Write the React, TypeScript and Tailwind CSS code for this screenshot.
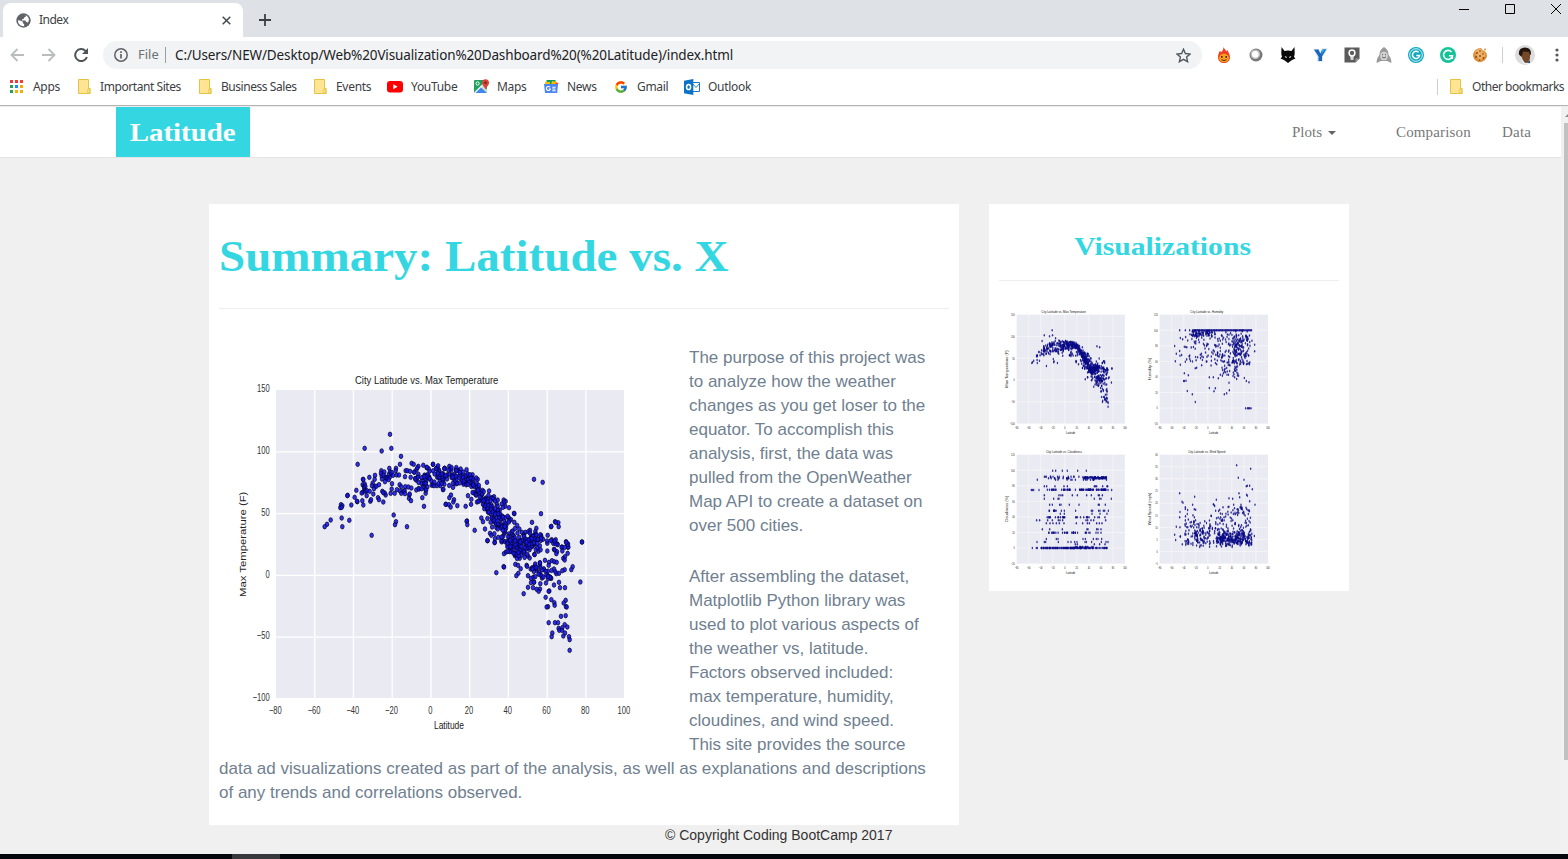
import React from "react";
import { FcGoogle } from "react-icons/fc";

type Pt = [number, number];

function rng(seed: number) {
  let s = seed;
  return () => {
    s = (s * 1664525 + 1013904223) % 4294967296;
    return s / 4294967296;
  };
}

const shift = (pts: Pt[], dx: number, dy: number): Pt[] => pts.map(([x, y]) => [x + dx, y + dy]);

// Southern latitudes
const south: Pt[] = [
  [543,223],[467,265],[518,273],[547,265],[576,289],[446,313],[573,313],[416,406],[415,407],[396,434],[400,437],[394,443],[398,442],
  [365,480],[354,493],[347,500],[398,474],[421,481],[400,500],[488,526],[554,465],[561,485],[558,494],[594,500],[427,435],[437,412],
  [442,391],[462,358],[463,359],[481,352],[498,346],[497,358],[445,425],[444,424],[463,435],[473,407],[484,424],[486,419],[493,402],[507,413],
  [510,419],[523,426],[530,405],[527,399],[600,415],[606,422],[640,413],[645,439],[650,400],[711,433],[561,325],[608,310],[614,313],
  [628,319],[672,313],[682,325],[707,325],[653,323],[460,422],[461,374],[467,372],[465,380],[469,379],[466,386],[468,391],[461,397],
  [470,394],[458,399],[474,392],[482,394],[491,369],[489,377],[498,379],[495,386],[502,379],[510,374],[517,332],[516,340],[518,348],
  [526,336],[524,346],[530,352],[519,357],[532,355],[528,365],[536,353],[541,325],[543,336],[540,343],[546,344],[548,337],[542,352],
  [539,359],[552,346],[560,332],[563,345],[570,345],[549,371],[548,387],[545,400],[557,400],[520,394],[523,398],[564,389],[572,374],
  [577,380],[573,393],[577,400],[584,394],[589,380],[598,381],[607,384],[587,392],[588,401],[601,405],[602,402],[590,332],[595,332],
  [603,334],[588,350],[605,352],[622,390],[630,387],[642,381],[702,389],[694,377],[684,377],[668,376],[672,374]
];
// Northern latitudes, warm half of the chart
const north: Pt[] = [
  [9,313],[58,319],[44,325],[43,326],[92,327],[312,358],[338,367],[171,367],[143,358],[333,461],[253,461],[252,460],[237,443],[306,487],
  [319,505],[375,485],[385,488],[378,487],[363,500],[364,499],[386,500],[353,526],[456,546],[63,405],[58,413],[72,419],[70,426],[47,433],
  [57,434],[62,441],[82,437],[107,439],[124,418],[123,433],[111,483],[110,484],[112,494],[134,511],[154,474],[159,485],[165,507],[172,542],
  [194,547],[195,536],[40,388],[114,407],[141,426],[150,422],[162,436],[163,446],[173,451],[192,410],[186,413],[191,418],[203,420],
  [221,420],[227,424],[222,426],[215,432],[200,432],[226,439],[184,434],[333,526],[339,538],[352,550],[365,539],[377,539],[370,550],
  [382,552],[408,545],[414,552],[414,562],[396,561],[243,479],[253,487],[236,473],[225,473],[213,478],[204,452],[207,466],[180,520],
  [184,526],[193,521],[220,528],[268,507],[276,517],[286,517],[300,511]
];
// Northern latitudes, cold half of the chart
const cold: Pt[] = [
  [173,2],[194,8],[219,2],[225,5],[222,41],[228,36],[255,47],[269,55],[221,80],[222,81],[199,98],[256,73],[264,76],[272,86],[265,100],
  [259,107],[290,76],[291,79],[281,161],[294,107],[294,142],[303,115],[303,128],[312,126],[312,127],[309,143],[331,131],[330,147],[320,148],
  [326,154],[345,61],[352,33],[336,114],[348,129],[358,153],[356,154],[347,172],[364,179],[372,135],[373,188],[374,196],[354,200],[350,201],
  [407,181],[401,189],[408,200],[410,201],[390,143],[405,143],[387,127],[451,126],[428,80],[424,89],[404,89],[397,92],[387,100],[379,101],
  [376,95],[372,87],[366,62],[373,65],[380,67],[357,67],[356,76],[400,55],[405,50],[404,60],[413,40],[395,22],[397,33],[415,21],[412,13],
  [409,7],[456,6],[356,248],[375,248],[384,248],[393,229],[407,227],[404,254],[412,261],[397,263],[386,265],[388,271],[396,271],[367,279],
  [365,290],[405,279],[400,288],[417,290],[419,299],[419,331],[383,14],[376,11],[372,28],[374,30],[381,35],[379,41],[325,34],[313,43],
  [314,44],[299,54],[293,48],[292,43],[281,39],[272,34],[302,87],[307,83],[316,78],[330,76],[342,89],[351,3],[363,2],[374,3],[404,22]
];

function temperatureCloud(): Pt[] {
  const r = rng(41);
  const out: Pt[] = [...shift(south, -30, 39), ...shift(north, 633, 39), ...shift(cold, 633, 579)];
  // centre line of the dense band: x, y, vertical spread
  const band: [number, number, number][] = [
    [585, 391, 36], [640, 392, 42], [700, 390, 40], [745, 396, 34], [775, 424, 40], [805, 466, 54],
    [825, 503, 66], [850, 534, 66], [885, 580, 58], [925, 590, 48], [968, 592, 44],
  ];
  const counts = [40, 42, 40, 26, 26, 26, 32, 34, 34, 28];
  band.slice(0, -1).forEach((a, i) => {
    const b = band[i + 1];
    for (let k = 0; k < counts[i]; k++) {
      const t = r();
      const n = r() + r() - 1;
      out.push([a[0] + (b[0] - a[0]) * t, a[1] + (b[1] - a[1]) * t + n * (a[2] + (b[2] - a[2]) * t)]);
    }
  });
  for (let k = 0; k < 26; k++) out.push([862 + r() * 46, 600 + (r() + r() - 1) * 26]);
  for (let k = 0; k < 18; k++) out.push([915 + r() * 45, 580 + (r() + r() - 1) * 18]);
  for (let k = 0; k < 20; k++) out.push([935 + r() * 40, 668 + (r() + r() - 1) * 26]);
  for (let k = 0; k < 12; k++) out.push([980 + r() * 20, 690 + (r() + r() - 1) * 24]);
  return out;
}
const temperature = temperatureCloud();

const frameX = 53;
const frameY = 44;
const frameW = 325;
const frameH = 327;

const temperatureSmall: Pt[] = temperature.map(([x, y]) => [
  frameX + ((x - 171) / 1044) * frameW,
  frameY + ((y - 129) / 924) * frameH,
]);

function humidity(): Pt[] {
  const r = rng(7);
  const out: Pt[] = shift(
    [
      [119,106],[104,153],[109,176],[106,199],[121,129],[121,209],[133,235],[131,258],[138,257],[145,241],[142,288],[157,298],[166,321],
      [185,211],[208,247],[208,279],[222,289],[226,280],[235,250],[253,298],[260,295],[268,286],[267,263],[313,249],[319,258],[327,262],
      [344,169],[344,149],[336,137],[170,218],[220,247],[241,239],[317,340],[323,340],[326,340],[329,340],[333,340],[120,182],[125,180],
      [128,133],[133,155],[119,168],[284,247],[290,252],[279,243],[166,220],[136,106],[149,106],[150,118],[133,258]
    ] as Pt[], -6, -15);
  for (let x = 152; x < 305; x += 2.6) out.push([x + r(), 91]);
  for (let x = 303; x < 331; x += 3.2) out.push([x, 91]);
  for (let k = 0; k < 55; k++) out.push([150 + r() * 60, 92 + r() * 18]);
  for (let k = 0; k < 62; k++) out.push([130 + r() * 75, 92 + r() * 95]);
  for (let k = 0; k < 110; k++) out.push([205 + r() * 115, 92 + r() * 105]);
  for (let k = 0; k < 80; k++) out.push([270 + r() * 55, 105 + r() * 88]);
  for (let k = 0; k < 40; k++) out.push([275 + r() * 28, 115 + r() * 50]);
  for (let k = 0; k < 45; k++) out.push([240 + r() * 50, 165 + r() * 65]);
  return out;
}

function cloudiness(): Pt[] {
  const r = rng(19);
  const out: Pt[] = [];
  const row = (y: number, x0: number, x1: number, n: number) => {
    for (let k = 0; k < n; k++) out.push([x0 - 27 + r() * (x1 - x0), y]);
  };
  const at = (y: number, xs: number[]) => xs.forEach((x) => out.push([x - 27, y]));
  at(92, [188, 197, 217, 232, 263, 289]);
  row(110, 163, 270, 14); row(115, 170, 270, 12); row(112, 275, 350, 30); row(115, 282, 353, 34); row(119, 195, 350, 14);
  at(119, [142]);
  at(139, [163, 170, 195, 222, 232, 313, 316, 320, 338, 351, 353]);
  at(150, [124, 127, 131, 147, 365, 354]);
  row(149, 160, 275, 24); row(149, 268, 352, 48);
  at(166, [163, 207, 213, 218, 247, 262, 290, 304, 325, 328, 337]);
  at(176, [163, 191, 204, 207, 313, 329, 333, 364]);
  at(194, [179, 187, 209, 213, 238, 267, 325, 328, 346]);
  row(212, 172, 226, 10); at(212, [257, 304, 308, 326, 330, 340, 344, 355]);
  at(221, [211, 223, 306, 330, 351]);
  row(232, 170, 225, 14); row(232, 255, 300, 9); at(232, [314, 324, 328, 345]);
  at(241, [140, 149, 173, 187, 205, 210, 218, 288, 293, 303, 311, 347]);
  at(250, [169, 180, 189, 199, 208, 222, 259, 278, 292, 298, 320, 328, 336]);
  at(268, [157, 179, 217, 291, 294, 320, 324, 333]);
  row(278, 176, 235, 15); row(278, 240, 302, 14); at(278, [318, 324, 333]);
  at(297, [169, 199, 204, 279, 286, 310, 319, 324, 335]);
  at(306, [141, 163, 167, 205, 234, 243, 254, 261, 285, 289, 305, 334, 348, 354]);
  at(313, [262, 256, 313, 329, 345]);
  row(324, 150, 215, 36); row(324, 217, 312, 66); row(324, 312, 356, 14); at(324, [127, 142, 139]);
  row(321, 255, 310, 14);
  return out;
}

function wind(): Pt[] {
  const r = rng(88);
  const out: Pt[] = shift(
    [
      [290,76],[332,86],[295,113],[312,119],[337,148],[329,137],[322,137],[319,139],[297,160],[299,172],[320,164],[322,167],[329,184],
      [345,194],[343,288],[119,160],[126,185],[129,188],[164,170],[158,194],[136,202],[143,210],[120,216],[119,232],[120,262],[109,260],
      [104,284],[107,300],[121,290],[127,313],[267,175],[278,176],[229,179],[222,195],[220,193],[224,198],[281,194],[303,194],[239,209],
      [227,212],[303,200],[304,206],[163,208],[167,209],[121,289],[214,228],[236,213],[136,207],[163,232],[159,226]
    ] as Pt[], -6, 0);
  for (let k = 0; k < 48; k++) out.push([128 + r() * 34, 315 - Math.pow(r(), 1.3) * 95]);
  for (let k = 0; k < 95; k++) out.push([158 + r() * 46, 326 - (r() + r() * r()) * 48]);
  for (let k = 0; k < 36; k++) out.push([202 + r() * 40, 315 - r() * 95]);
  for (let k = 0; k < 240; k++) out.push([222 + r() * 108, 325 - (r() + r()) * 28]);
  for (let k = 0; k < 120; k++) out.push([235 + r() * 92, 310 - Math.pow(r(), 1.2) * 110]);
  return out;
}

const xTicks = ["−80", "−60", "−40", "−20", "0", "20", "40", "60", "80", "100"];

function MainChart() {
  const yTicks = ["150", "100", "50", "0", "−50", "−100"];
  return (
    <svg className="float-left mr-5 mt-px h-[405px] w-[450px]" viewBox="0 0 1350 1215" fontFamily="Liberation Sans, Arial, sans-serif">
      <rect x="171" y="129" width="1044" height="924" fill="#eaeaf2" />
      {xTicks.map((t, i) => (
        <g key={t}>
          {i > 0 && i < 9 && <line x1={171 + i * 116.2} x2={171 + i * 116.2} y1="129" y2="1053" stroke="#fff" strokeWidth="4" />}
          <text transform={`translate(${169 + i * 116.2} 1101) scale(.71 1)`} fontSize="32" fill="#333" textAnchor="middle">{t}</text>
        </g>
      ))}
      {yTicks.map((t, i) => (
        <g key={t}>
          {i > 0 && i < 5 && <line x1="171" x2="1215" y1={129 + i * 185.4} y2={129 + i * 185.4} stroke="#fff" strokeWidth="4" />}
          <text transform={`translate(152 ${135 + i * 185.6}) scale(.71 1)`} fontSize="32" fill="#333" textAnchor="end">{t}</text>
        </g>
      ))}
      <g fill="#1414f5" fillOpacity="0.88" stroke="#05052a" strokeOpacity="0.85" strokeWidth="2.6">
        {temperature.map(([x, y], i) => <ellipse key={i} cx={x} cy={y} rx="5.4" ry="6.8" />)}
      </g>
      <text x="408" y="111" fontSize="35" fill="#222" textLength="430" lengthAdjust="spacingAndGlyphs">City Latitude vs. Max Temperature</text>
      <text x="645" y="1147" fontSize="31" fill="#222" textLength="90" lengthAdjust="spacingAndGlyphs">Latitude</text>
      <text transform="translate(80 750) rotate(-90)" fontSize="25" fill="#222" textLength="316" lengthAdjust="spacingAndGlyphs">Max Temperature (F)</text>
    </svg>
  );
}

interface ThumbProps {
  title: string;
  titleX: number;
  titleW: number;
  yLabel: string;
  yLabelW: number;
  yTicks: string[];
  points: Pt[];
}

function Thumb({ title, titleX, titleW, yLabel, yLabelW, yTicks, points }: ThumbProps) {
  const step = frameH / (yTicks.length - 1);
  return (
    <svg className="h-[140px] w-[143px]" viewBox="0 0 429 420" fontFamily="Liberation Sans, Arial, sans-serif">
      <rect x={frameX} y={frameY} width={frameW} height={frameH} fill="#eaeaf2" />
      {xTicks.map((t, i) => (
        <g key={t}>
          {i > 0 && i < 9 && <line x1={frameX + i * 36.1} x2={frameX + i * 36.1} y1={frameY} y2={frameY + frameH} stroke="#f7f7fb" strokeWidth="2" />}
          <text transform={`translate(${frameX + i * 36.1} 387) scale(.6 1)`} fontSize="11" fill="#222" textAnchor="middle">{t}</text>
        </g>
      ))}
      {yTicks.map((t, i) => (
        <g key={t}>
          {i > 0 && i < yTicks.length - 1 && <line x1={frameX} x2={frameX + frameW} y1={frameY + i * step} y2={frameY + i * step} stroke="#f7f7fb" strokeWidth="2" />}
          <text transform={`translate(47 ${frameY + 4 + i * step}) scale(.6 1)`} fontSize="11" fill="#222" textAnchor="end">{t}</text>
        </g>
      ))}
      <g fill="#0a0a86" fillOpacity="0.82">
        {points.map(([x, y], i) => <ellipse key={i} cx={x} cy={y} rx="2.1" ry="3.8" />)}
      </g>
      <text x={titleX} y="38" fontSize="13" fill="#111" textLength={titleW} lengthAdjust="spacingAndGlyphs">{title}</text>
      <text x="201" y="403" fontSize="12" fill="#111" textLength="28" lengthAdjust="spacingAndGlyphs">Latitude</text>
      <text transform={`translate(26 ${207 + yLabelW / 2}) rotate(-90)`} fontSize="9" fill="#222" textLength={yLabelW} lengthAdjust="spacingAndGlyphs">{yLabel}</text>
    </svg>
  );
}

const percentTicks = ["120", "100", "80", "60", "40", "20", "0", "−20"];
const thumbs: ThumbProps[] = [
  { title: "City Latitude vs. Max Temperature", titleX: 127, titleW: 134, yLabel: "Max Temperature (F)", yLabelW: 112, yTicks: ["150", "100", "50", "0", "−50", "−100"], points: temperatureSmall },
  { title: "City Latitude vs. Humidity", titleX: 145, titleW: 99, yLabel: "Humidity (%)", yLabelW: 68, yTicks: percentTicks, points: humidity() },
  { title: "City Latitude vs. Cloudiness", titleX: 141, titleW: 108, yLabel: "Cloudiness (%)", yLabelW: 80, yTicks: percentTicks, points: cloudiness() },
  { title: "City Latitude vs. Wind Speed", titleX: 138, titleW: 112, yLabel: "Wind Speed (mph)", yLabelW: 98, yTicks: ["40", "35", "30", "25", "20", "15", "10", "5", "0", "−5"], points: wind() },
];

function Folder() {
  return (
    <svg className="h-[15px] w-[13px] shrink-0" viewBox="0 0 13 15">
      <path d="M.5.5h10v9h1.7v5H.5z" fill="#ffe493" stroke="#e5c440" />
      <path d="M9.7 13.8v-3.4h1.6v3.4z" fill="#fff0b8" stroke="#e5c440" strokeWidth=".8" />
    </svg>
  );
}

function Globe() {
  return (
    <svg className="h-[15px] w-[15px]" viewBox="0 0 24 24">
      <circle cx="12" cy="12" r="11.5" fill="#5f6368" />
      <path d="M3 11.500l5 1 3 1.500v2.500l2 1V21C7.500 21.500 3 17.500 3 11.500zM12 3l3.500.5V6l-3 1.500v2H10V12h5l1.500 2.500 2.500.5 1-1.500c2-4-1-9-5-10z" fill="#fff" />
    </svg>
  );
}

function AppsGrid() {
  const colors = ["#f03a37", "#f03a37", "#f03a37", "#2a9d58", "#1a8cf0", "#f4a800", "#2a9d58", "#f4b000", "#f4b000"];
  return (
    <svg className="h-[13px] w-[13px]" viewBox="0 0 13 13">
      {colors.map((c, i) => <rect key={i} x={(i % 3) * 5} y={Math.floor(i / 3) * 5} width="3" height="3" fill={c} />)}
    </svg>
  );
}

function YouTube() {
  return (
    <svg className="h-[12px] w-[16px]" viewBox="0 0 16 12">
      <rect width="16" height="11.500" rx="3" fill="#f00" />
      <path d="M6.300 3.300v5L10.600 5.800z" fill="#fff" />
    </svg>
  );
}

function Maps() {
  return (
    <svg className="h-[15px] w-[15px]" viewBox="0 0 15 15">
      <rect y="1" width="13" height="13" rx="1" fill="#1fa15d" />
      <path d="M0 13.500 11.500 2H13v2L3 14H1z" fill="#f2f2f2" />
      <path d="M1.500 14 7 8.500 12.500 14z" fill="#4285f4" />
      <path d="m7 8.500 2-2 4 4V14z" fill="#d5d9df" />
      <circle cx="3.600" cy="4.500" r="1.600" fill="none" stroke="#fff" />
      <path d="M11.500 10.500C11 8 8 6.500 8 3.700a3.500 3.500 0 0 1 7 0c0 2.800-3 4.300-3.500 6.800z" fill="#db4437" />
      <circle cx="11.500" cy="3.700" r="1.200" fill="#7b231e" />
    </svg>
  );
}

function News() {
  return (
    <svg className="h-[13px] w-[15px]" viewBox="0 0 15 13">
      <path d="M2.500 0h9v4h-9z" fill="#0f9d58" />
      <path d="m8 1 5 1-1 3H7z" fill="#fbbc04" />
      <path d="M1 2h5v3H1z" fill="#fbbc04" />
      <path d="M11 2.500 14.500 3l-1 3z" fill="#ea4335" />
      <path d="M0 4h14l-.8 9H1z" fill="#4c86ee" />
      <path d="M6 7.300A2 2 0 1 0 6.300 9H4.700M8.300 7.200h3.400M8.300 9h3M8.300 10.800h3.400" fill="none" stroke="#fff" strokeWidth="1.100" />
    </svg>
  );
}

function Outlook() {
  return (
    <svg className="h-[16px] w-[16px]" viewBox="0 0 16 16">
      <path d="M8.500 3.500h7v9h-7z" fill="#fff" stroke="#1976c8" />
      <path d="m8.500 4.500 3.500 4 3.500-4" fill="none" stroke="#1976c8" strokeWidth=".9" />
      <path d="m0 1.700 9.300-1.700v16L0 14.300z" fill="#0b72c6" />
      <ellipse cx="4.600" cy="8" rx="2" ry="2.600" fill="none" stroke="#fff" strokeWidth="1.500" />
    </svg>
  );
}

const extensions: React.ReactNode[] = [
  <g key="flame">
    <path d="M7.500 0c.5 2 2.500 2.500 2.500 4.500L11.500 3c.5 2 2.500 4.500 2.500 7 0 4-3 6-6 6s-6-2-6-6c0-2.500 1-3.500 1.500-6L5.500 5C6.500 4 7.500 2 7.500 0z" fill="#ef3e22" />
    <ellipse cx="8" cy="11" rx="5" ry="4.300" fill="#f8a01c" />
    <path d="M5.800 9v1.800M10.200 9v1.800" stroke="#4a1d06" strokeWidth="1.500" />
    <path d="M5.500 12.700q2.500 1.800 5 0" stroke="#4a1d06" fill="none" strokeWidth=".9" />
  </g>,
  <g key="orb">
    <circle cx="8" cy="8" r="6.500" fill="#777" />
    <circle cx="7.300" cy="7.300" r="4.100" fill="#fff" stroke="#bbb" strokeWidth="1.500" />
  </g>,
  <g key="wolf">
    <path d="M1.500 0 4.500 4q3.500-1 7 0l3-4 .2 7-.7 3 1.500 1.500-3.500 1.500-2 1.500L8 16l-2-1.500L4 13 .5 11.500 2 10l-.7-3z" fill="#090909" />
    <path d="m4.500 9 2.700 1-1.200 1zM11.500 9 8.800 10l1.200 1z" fill="#fff" />
  </g>,
  <g key="y">
    <path d="M1 2h6l1 3 2-4h6l-5 8v6H5v-5z" fill="#e7e9ed" />
    <path d="M2 2.500h4.500L8.300 6.500 10 3l1.500-.8H14.500L10 9.500V14H6.500V9.500z" fill="#1767bd" />
    <path d="m10 3 2-1h2L9 8z" fill="#2f9fe8" />
  </g>,
  <g key="keep">
    <path d="M.5.500h15v11l-4 4h-11z" fill="#5b5b5b" />
    <path d="M11.500 15.500v-4h4z" fill="#999" />
    <circle cx="8" cy="6" r="2.900" fill="#5b5b5b" stroke="#fff" strokeWidth="1.500" />
    <path d="M6.300 10h3.400M6.500 12h3" stroke="#fff" strokeWidth="1.500" />
  </g>,
  <g key="rocket">
    <path d="M8 0c3 2 4.500 4 4.500 7.500L15 12l.5 4L11 14H5L.5 16 1 12l2.500-4.500C3.500 4 5 2 8 0z" fill="#9b9b9b" />
    <ellipse cx="8" cy="9" rx="3.800" ry="4.200" fill="#d2d2d2" />
    <path d="M6.500 7v1.200M9.500 7v1.200M6 10q2 1.800 4 0" stroke="#666" fill="none" />
  </g>,
  <g key="gblue">
    <circle cx="8" cy="8" r="8" fill="#11a9bf" />
    <circle cx="8" cy="8" r="6.300" fill="none" stroke="#fff" strokeWidth=".8" />
    <path d="M10.500 5.300A3.600 3.600 0 1 0 11.600 8.500H8.300" fill="none" stroke="#fff" strokeWidth="1.500" />
  </g>,
  <g key="ggreen">
    <circle cx="8" cy="8" r="8" fill="#15c39a" />
    <path d="M11.500 5A4.500 4.500 0 1 0 12.500 8.700H9M12.300 8v4" fill="none" stroke="#fff" strokeWidth="1.600" />
  </g>,
  <g key="cookie">
    <path d="M6 1.500 9 1l2 2.500 1.500.5L14.500 6l.5 3a7 7 0 1 1-9-7.500z" fill="#dc8f3c" />
    <path d="M3 5a6 6 0 0 1 6-3l1.500 2.500 3 2.500-1.500 4-5 2z" fill="#efb062" />
    <g fill="#7c421c"><circle cx="5" cy="6" r=".9" /><circle cx="8" cy="9" r=".9" /><circle cx="11.500" cy="11" r=".9" /><circle cx="4" cy="10" r=".9" /><circle cx="8" cy="4" r=".8" /><circle cx="11" cy="7" r=".8" /><circle cx="7.500" cy="13" r=".8" /></g>
    <circle cx="13" cy="2.500" r="1" fill="#dc8f3c" />
  </g>,
];

interface BookmarkProps {
  icon: React.ReactNode;
  label: string;
  className: string;
}

function Bookmark({ icon, label, className }: BookmarkProps) {
  return (
    <div className={`flex shrink-0 items-center whitespace-nowrap ${className}`}>
      {icon}
      <span>{label}</span>
    </div>
  );
}

function BrowserChrome() {
  return (
    <header className="font-['Noto_Sans','Open_Sans',sans-serif] text-[12px] text-[#3c4043]">
      <div className="flex h-[37px] bg-[#dee1e6]">
        <div className="ml-[3px] mt-[3px] flex h-[34px] w-[240px] items-center rounded-t-lg bg-white pl-[13px] pr-3">
          <Globe />
          <span className="ml-2 text-[12px] tracking-[-0.5px]">Index</span>
          <svg className="ml-auto h-[9px] w-[9px]" viewBox="0 0 9 9"><path d="m.7.7 7.600 7.600m0-7.600L.7 8.300" stroke="#45494d" strokeWidth="1.500" /></svg>
        </div>
        <svg className="ml-4 mt-[14px] h-3 w-3" viewBox="0 0 12 12"><path d="M6 0v12M0 6h12" stroke="#3c4043" strokeWidth="1.800" /></svg>
        <div className="ml-auto mr-[7px] mt-1 flex h-[10px] gap-9">
          <svg className="h-[10px] w-[10px]" viewBox="0 0 10 10"><path d="M0 5.500h10" stroke="#000" /></svg>
          <svg className="h-[10px] w-[10px]" viewBox="0 0 10 10"><path d="M.5.500h9v9h-9z" fill="none" stroke="#000" /></svg>
          <svg className="h-[10px] w-[10px]" viewBox="0 0 10 10"><path d="m0 0 10 10M10 0 0 10" stroke="#000" /></svg>
        </div>
      </div>
      <div className="flex h-[34px] items-center bg-white pt-[2px]">
        <svg className="ml-[10px] h-[14px] w-[14px]" viewBox="0 0 14 14"><path d="M14 7H1.500M7.500 1l-6 6 6 6" fill="none" stroke="#babcbe" strokeWidth="1.800" /></svg>
        <svg className="ml-[18px] h-[14px] w-[14px]" viewBox="0 0 14 14"><path d="M0 7h12.500M6.500 1l6 6-6 6" fill="none" stroke="#babcbe" strokeWidth="1.800" /></svg>
        <svg className="ml-[18px] h-[14px] w-[14px]" viewBox="0 0 14 14"><path d="M12.900 9A6 6 0 1 1 11.500 2.900L13 4.400" fill="none" stroke="#505458" strokeWidth="2" /><path d="M14 0v6H8z" fill="#505458" /></svg>
        <div className="ml-[15px] flex h-7 w-[1099px] items-center rounded-full bg-[#f1f3f4] pl-[11px] pr-[11px] text-[14px]">
          <svg className="h-[14px] w-[14px]" viewBox="0 0 14 14"><circle cx="7" cy="7" r="6.200" fill="none" stroke="#5f6368" strokeWidth="1.500" /><path d="M7 6v4.500M7 3.200v1.700" stroke="#5f6368" strokeWidth="1.700" /></svg>
          <span className="ml-[10px] w-[27px] text-[13px] text-[#6d7175]">File</span>
          <span className="h-4 w-px bg-[#9a9da1]" />
          <span className="ml-[9px] text-[13.500px] tracking-[-0.13px] text-[#202124]">C:/Users/NEW/Desktop/Web%20Visualization%20Dashboard%20(%20Latitude)/index.html</span>
          <svg className="ml-auto h-[15px] w-[15px]" viewBox="0 0 15 15"><path d="m7.500 1.200 1.900 4.300 4.700.5-3.500 3.100 1 4.600-4.100-2.400-4.100 2.400 1-4.600L.9 6l4.700-.5z" fill="none" stroke="#54585c" strokeWidth="1.400" /></svg>
        </div>
        <div className="ml-[14px] flex gap-4">
          {extensions.map((e, i) => <svg key={i} className="h-4 w-4" viewBox="0 0 16 16">{e}</svg>)}
        </div>
        <span className="ml-[14px] h-4 w-px bg-[#cfcfcf]" />
        <svg className="ml-3 h-5 w-5" viewBox="0 0 20 20">
          <circle cx="10" cy="10" r="10" fill="#dcdcdc" />
          <path d="M6 15h9l-2 4H9z" fill="#e8edf7" /><path d="m12 18 3-3v3z" fill="#2c4f9c" />
          <path d="M6 6h9v7q-1 5-4 5-2 0-4-5z" fill="#754928" />
          <path d="M4 9.500Q3 3 10 2.500q6 0 6 6l-.8 2L14 7 8 6.500 6.500 12z" fill="#24160e" />
        </svg>
        <svg className="ml-[20px] h-[14px] w-1" viewBox="0 0 4 14"><g fill="#55585c"><circle cx="2" cy="2" r="1.600" /><circle cx="2" cy="7" r="1.600" /><circle cx="2" cy="12" r="1.600" /></g></svg>
      </div>
      <div className="flex h-[35px] items-center border-b border-[#b4b4b4] bg-white pb-[3px] pl-[10px] tracking-[-0.3px]">
        <Bookmark className="w-[68px] gap-[10px]" icon={<AppsGrid />} label="Apps" />
        <Bookmark className="w-[121px] gap-[9px] tracking-[-0.430px]" icon={<Folder />} label="Important Sites" />
        <Bookmark className="w-[115px] gap-[9px] tracking-[-0.450px]" icon={<Folder />} label="Business Sales" />
        <Bookmark className="w-[73px] gap-[9px]" icon={<Folder />} label="Events" />
        <Bookmark className="w-[87px] gap-[8px]" icon={<YouTube />} label="YouTube" />
        <Bookmark className="w-[70px] gap-[8px]" icon={<Maps />} label="Maps" />
        <Bookmark className="w-[70px] gap-[8px]" icon={<News />} label="News" />
        <Bookmark className="w-[70px] gap-[9px]" icon={<FcGoogle className="h-[14px] w-[14px]" />} label="Gmail" />
        <Bookmark className="gap-[8px]" icon={<Outlook />} label="Outlook" />
        <span className="ml-auto mr-3 h-4 w-px bg-[#cfcfcf]" />
        <Bookmark className="w-[118px] gap-[9px] tracking-[-0.480px]" icon={<Folder />} label="Other bookmarks" />
      </div>
    </header>
  );
}

export default function App() {
  return (
    <div className="flex h-[859px] w-[1568px] flex-col overflow-hidden bg-[#f0f0f0] font-['Liberation_Sans',Arial,sans-serif]">
      <BrowserChrome />
      <div className="flex h-[748px] border-t border-[#ececec]">
        <main className="w-[1561px]">
          <nav className="flex h-[51px] border-b border-[#e4e4e4] bg-white font-['Liberation_Serif',serif]">
            <div className="ml-[116px] flex w-[134px] items-center justify-center bg-[#34d7e1] text-[26px] font-bold text-white">
              <span className="scale-x-[1.11]">Latitude</span>
            </div>
            <div className="ml-auto mr-[30px] flex items-center text-[15px] text-[#777]">
              <span className="w-[30px]">Plots</span>
              <svg className="ml-[6px] mt-[2px] h-1 w-2" viewBox="0 0 8 4"><path d="M0 0h8L4 4z" fill="#666" /></svg>
              <span className="ml-[60px] w-[76px] tracking-[0.15px]">Comparison</span>
              <span className="ml-[30px] w-[29px] tracking-[0.2px]">Data</span>
            </div>
          </nav>
          <div className="ml-[209px] mt-[46px] flex items-start gap-[30px]">
            <section className="h-[621px] w-[750px] bg-white px-[10px]">
              <h1 className="h-[105px] whitespace-nowrap border-b border-[#eee] pt-[26px] font-['Liberation_Serif',serif] text-[45px] font-bold leading-[52px] text-[#34d7e1]">
                <span className="inline-block origin-left scale-x-[1.045]">Summary: Latitude vs. X</span>
              </h1>
              <div className="mt-[37px] pr-5 text-[17px] leading-6 text-[#708090]">
                <MainChart />
                <p>The purpose of this project was to analyze how the weather changes as you get loser to the equator. To accomplish this analysis, first, the data was pulled from the OpenWeather Map API to create a dataset on over 500 cities.</p>
                <p className="mt-[27px]">After assembling the dataset, Matplotlib Python library was used to plot various aspects of the weather vs, latitude. Factors observed included: max temperature, humidity, cloudines, and wind speed. This site provides the source data ad visualizations created as part of the analysis, as well as explanations and descriptions of any trends and correlations observed.</p>
              </div>
            </section>
            <aside className="h-[387px] w-[360px] bg-white px-[10px]">
              <h2 className="h-[77px] border-b border-[#eee] pr-3 pt-[28px] text-center font-['Liberation_Serif',serif] text-[26px] font-bold leading-[30px] text-[#34d7e1]">
                <span className="inline-block scale-x-[1.14]">Visualizations</span>
              </h2>
              <div className="mt-[19px] grid grid-cols-[143px_143px]">
                {thumbs.map((t) => <Thumb key={t.title} {...t} />)}
              </div>
            </aside>
          </div>
          <footer className="ml-[665px] text-[14px] leading-5 text-[#333]">© Copyright Coding BootCamp 2017</footer>
        </main>
        <div className="flex w-[7px] flex-col items-end bg-[#f1f1f1]">
          <svg className="mt-[7px] h-[3px] w-1" viewBox="0 0 4 3"><path d="M1 3 4 0v3z" fill="#888" /></svg>
          <div className="mt-[6px] h-[637px] w-1 bg-[#c1c1c1]" />
        </div>
      </div>
      <div className="flex h-[5px] bg-[#05080d]"><span className="ml-[232px] h-full w-12 bg-[#38393c]" /></div>
    </div>
  );
}
